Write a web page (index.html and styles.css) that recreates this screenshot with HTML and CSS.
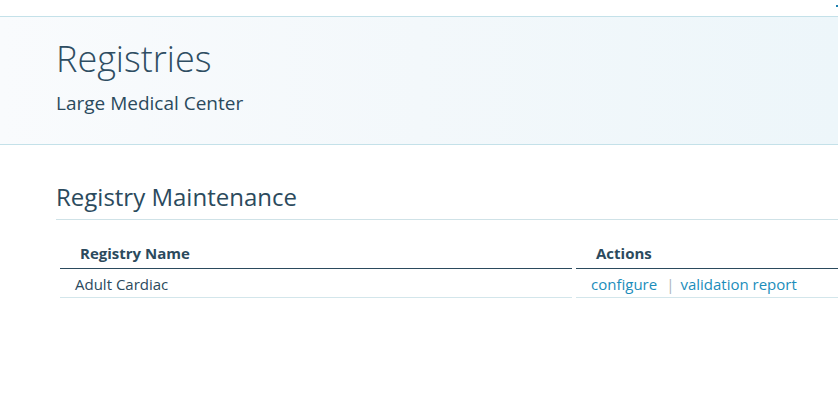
FILE: index.html
```html
<!DOCTYPE html>
<html lang="en">
<head>
<meta charset="utf-8">
<title>Registries</title>
<link rel="stylesheet" href="styles.css">
</head>
<body>
<div class="topbar"><span class="topbar-mark"></span></div>
<header class="page-header">
  <h1 class="page-title">Registries</h1>
  <p class="page-subtitle">Large Medical Center</p>
</header>
<main class="content">
  <h2 class="section-title">Registry Maintenance</h2>
  <table class="registry-table">
    <thead>
      <tr>
        <th class="col-name">Registry Name</th>
        <th class="col-actions">Actions</th>
      </tr>
    </thead>
    <tbody>
      <tr>
        <td>Adult Cardiac</td>
        <td><a href="#" class="action-link">configure</a><span class="sep">|</span><a href="#" class="action-link">validation report</a></td>
      </tr>
    </tbody>
  </table>
</main>
</body>
</html>
```

FILE: styles.css
```css
html, body {
  margin: 0;
  padding: 0;
  overflow: hidden;
  background: #ffffff;
}
body {
  font-family: "Open Sans", "Noto Sans", sans-serif;
  color: #2b4a5d;
}
.topbar {
  height: 16px;
  display: flex;
  justify-content: flex-end;
}
.topbar-mark {
  width: 2px;
  height: 2px;
  margin-top: 5px;
  background: #1a7fae;
}
.page-header {
  border-top: 1px solid #c4e1e9;
  border-bottom: 1px solid #c4e1e9;
  background: linear-gradient(to right, #f9fbfd 0%, #f3f8fb 50%, #edf6fa 100%);
  padding: 20px 56px 29px;
}
.page-title {
  margin: 0;
  font-size: 36px;
  line-height: 44px;
  font-weight: 300;
  color: #2e4d62;
}
.page-subtitle {
  margin: 10px 0 0;
  font-size: 19px;
  line-height: 24px;
  font-weight: 400;
  color: #2b4a5d;
}
.content {
  padding-left: 56px;
  overflow: hidden;
}
.section-title {
  margin: 36px 0 0;
  font-size: 24px;
  line-height: 32px;
  font-weight: 400;
  color: #2b4a5d;
  padding-bottom: 6px;
  border-bottom: 1px solid #cfe2e7;
}
.registry-table {
  margin-top: 16px;
  border-collapse: separate;
  border-spacing: 4px 0;
  width: calc(100% + 4px);
}
.registry-table th {
  text-align: left;
  font-size: 15px;
  line-height: 20px;
  font-weight: 700;
  color: #2b4a5d;
  padding: 7px 0 5px 20px;
  border-bottom: 1px solid #2b4a5d;
}
.col-name {
  width: 492px;
}
.registry-table td {
  font-size: 15px;
  line-height: 20px;
  color: #2b4a5d;
  padding: 5px 0 3px 15px;
  border-bottom: 1px solid #d3e6eb;
}
.action-link {
  color: #1b8dbb;
  text-decoration: none;
}
.sep {
  color: #aab4ba;
  margin: 0 6px 0 9px;
}
```
